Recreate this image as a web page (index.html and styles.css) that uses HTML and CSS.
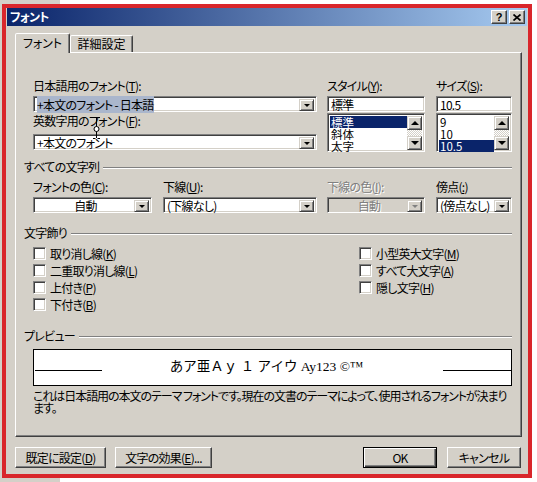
FILE: index.html
```html
<!DOCTYPE html>
<html lang="ja">
<head>
<meta charset="utf-8">
<title>フォント</title>
<link rel="stylesheet" href="styles.css">
</head>
<body>
<div class="frame">
  <div class="dialog">
    <div class="titlebar">
      <span class="title">フォント</span>
      <div class="tbtns">
        <span class="tbtn help">?</span>
        <span class="tbtn close"><svg width="8" height="7" viewBox="0 0 8 7"><path d="M0.5 0.5 L7.5 6.5 M7.5 0.5 L0.5 6.5" stroke="#000" stroke-width="1.7"/></svg></span>
      </div>
    </div>
    <div class="tabs">
      <div class="tab active">フォント</div>
      <div class="tab">詳細設定</div>
    </div>
    <div class="panel">
      <div class="row1">
        <div class="col w284">
          <div class="lbl">日本語用のフォント(<u>T</u>):</div>
          <div class="combo"><span class="val"><span class="hl">+本文のフォント - 日本語</span></span><span class="arrow"><i class="tri"></i></span></div>
          <div class="lbl l2">英数字用のフォント(<u>F</u>):</div>
          <div class="combo c2"><span class="val">+本文のフォント</span><span class="arrow"><i class="tri"></i></span></div>
        </div>
        <div class="col w98">
          <div class="lbl">スタイル(<u>Y</u>):</div>
          <div class="edit">標準</div>
          <div class="list">
            <div class="items">
              <div class="item sel">標準</div>
              <div class="item">斜体</div>
              <div class="item">太字</div>
            </div>
            <div class="sbar">
              <span class="sbtn"><i class="up"></i></span>
              <span class="track"></span>
              <span class="sbtn"><i class="down"></i></span>
            </div>
          </div>
        </div>
        <div class="col w76">
          <div class="lbl">サイズ(<u>S</u>):</div>
          <div class="edit">10.5</div>
          <div class="list">
            <div class="items">
              <div class="item">9</div>
              <div class="item">10</div>
              <div class="item sel">10.5</div>
            </div>
            <div class="sbar">
              <span class="sbtn"><i class="up"></i></span>
              <span class="track"></span>
              <span class="sbtn"><i class="down"></i></span>
            </div>
          </div>
        </div>
      </div>

      <div class="group g1"><span>すべての文字列</span><i class="rule"></i></div>
      <div class="row2">
        <div class="col w119">
          <div class="lbl">フォントの色(<u>C</u>):</div>
          <div class="combo"><span class="val center">自動</span><span class="arrow"><i class="tri"></i></span></div>
        </div>
        <div class="col w154">
          <div class="lbl">下線(<u>U</u>):</div>
          <div class="combo"><span class="val">(下線なし)</span><span class="arrow"><i class="tri"></i></span></div>
        </div>
        <div class="col w98">
          <div class="lbl dis">下線の色(<u>I</u>):</div>
          <div class="combo disabled"><span class="val center">自動</span><span class="arrow"><i class="tri"></i></span></div>
        </div>
        <div class="col w76">
          <div class="lbl">傍点(<u>:</u>)</div>
          <div class="combo"><span class="val">(傍点なし)</span><span class="arrow"><i class="tri"></i></span></div>
        </div>
      </div>

      <div class="group g2"><span>文字飾り</span><i class="rule"></i></div>
      <div class="checks">
        <div class="ccol">
          <div class="chk"><i class="box"></i>取り消し線(<u>K</u>)</div>
          <div class="chk"><i class="box"></i>二重取り消し線(<u>L</u>)</div>
          <div class="chk"><i class="box"></i>上付き(<u>P</u>)</div>
          <div class="chk"><i class="box"></i>下付き(<u>B</u>)</div>
        </div>
        <div class="ccol right">
          <div class="chk"><i class="box"></i>小型英大文字(<u>M</u>)</div>
          <div class="chk"><i class="box"></i>すべて大文字(<u>A</u>)</div>
          <div class="chk"><i class="box"></i>隠し文字(<u>H</u>)</div>
        </div>
      </div>

      <div class="group g3"><span>プレビュー</span><i class="rule"></i></div>
      <div class="preview">
        <i class="pline left"></i>
        <span class="ptext">あア亜Ａｙ １ アイウ Ay123 ©™</span>
        <i class="pline right"></i>
      </div>
      <div class="desc">これは日本語用の本文のテーマ フォントです。現在の文書のテーマによって、使用されるフォントが決まり<br>ます。</div>
    </div>
    <div class="footer">
      <span class="btn b91">既定に設定(<u>D</u>)</span>
      <span class="btn b97">文字の効果(<u>E</u>)...</span>
      <span class="spacer"></span>
      <span class="btn b74 default">OK</span>
      <span class="btn b74">キャンセル</span>
    </div>
  </div>
</div>
<svg class="cursor" width="9" height="22" viewBox="0 0 9 22"><path d="M1 0.5 H3.5 M5.5 0.5 H8 M4.5 1 V21 M1 21.5 H3.5 M5.5 21.5 H8" stroke="#000" stroke-width="1" fill="none"/><circle cx="4.5" cy="12" r="2.5" fill="#fff" stroke="#000" stroke-width="1"/></svg>
</body>
</html>
```

FILE: styles.css
```css
* { box-sizing: border-box; }
html, body { margin: 0; padding: 0; }
body {
  width: 537px;
  height: 482px;
  overflow: hidden;
  position: relative;
  background: linear-gradient(to right, #d4d0c8 60px, #ffffff 60px);
  font-family: "Noto Sans CJK JP", "Noto Sans", sans-serif;
  font-size: 12px;
  color: #000;
  font-feature-settings: "palt";
  letter-spacing: -0.75px;
}
u { text-decoration: underline; text-underline-offset: 1px; }

.frame {
  margin: 4px 0 0 2px;
  width: 530px;
  height: 474px;
  border: 4px solid #d9262b;
  background: #d4d0c8;
}
.dialog { padding: 0 1px; }

.titlebar {
  height: 18px;
  display: flex;
  align-items: center;
  justify-content: space-between;
  padding: 0 2px 0 3px;
  background: linear-gradient(to right, #0a246a, #a6caf0);
}
.title { color: #fff; font-weight: bold; line-height: 18px; }
.tbtns { display: flex; gap: 2px; }
.tbtn {
  width: 16px; height: 14px;
  display: flex; align-items: center; justify-content: center;
  background: #d4d0c8;
  border: 1px solid; border-color: #fff #404040 #404040 #fff;
  box-shadow: inset -1px -1px #808080;
  font-family: "Liberation Sans", sans-serif;
  font-weight: bold; font-size: 11px; line-height: 12px;
  letter-spacing: 0;
}

.tabs {
  height: 26px;
  display: flex;
  align-items: flex-end;
  padding-left: 8px;
}
.tab {
  height: 17px;
  line-height: 16px;
  text-align: center;
  background: #d4d0c8;
  border: 1px solid; border-bottom: none;
  border-color: #fff #404040 transparent #fff;
  box-shadow: inset -1px 0 #808080;
  border-radius: 2px 2px 0 0;
  width: 63px;
  letter-spacing: 0;
}
.tab.active {
  width: 55px;
  height: 20px;
  line-height: 18px;
  margin-bottom: -1px;
  position: relative;
  z-index: 1;
}

.panel {
  margin-left: 8px;
  width: 507px;
  height: 385px;
  border: 1px solid; border-color: #fff #404040 #404040 #fff;
  box-shadow: inset -1px -1px #808080;
  padding: 26px 9px 0 8px;
}

.lbl { line-height: 14px; height: 14px; margin-bottom: 3px; white-space: nowrap; }
.lbl.l2 { margin-top: 2px; margin-bottom: 6px; }
.lbl.dis { color: #808080; text-shadow: 1px 1px #fff; }

.row1 { display: flex; margin-left: 9px; }
.row1 .col + .col { margin-left: 10px; }
.row1 .col.w76 { margin-left: 11px; }
.w284 { width: 284px; }
.w98 { width: 98px; }
.w76 { width: 76px; }
.w119 { width: 119px; }
.w154 { width: 154px; }

.combo, .edit, .list {
  background: #fff;
  border: 1px solid; border-color: #808080 #fff #fff #808080;
  box-shadow: inset 1px 1px #404040, inset -1px -1px #d4d0c8;
}
.combo {
  height: 16px;
  display: flex;
  padding: 2px;
}
.combo .val {
  flex: 1;
  line-height: 12px;
  white-space: nowrap;
  padding-left: 1px;
}
.combo .val.center { text-align: center; }
.hl { background: #aab6cc; }
.arrow {
  width: 15px;
  height: 12px;
  display: flex; align-items: center; justify-content: center;
  background: #d4d0c8;
  border: 1px solid; border-color: #d4d0c8 #404040 #404040 #d4d0c8;
  box-shadow: inset 1px 1px #fff, inset -1px -1px #808080;
}
.tri {
  width: 0; height: 0;
  border-top: 3px solid #000;
  border-left: 3px solid transparent;
  border-right: 3px solid transparent;
}
.combo.disabled { background: #d4d0c8; }
.combo.disabled .val { color: #808080; text-shadow: 1px 1px #fff; }
.combo.disabled .tri { border-top-color: #808080; }

.edit {
  height: 16px;
  padding: 1px 2px 0 3px;
  line-height: 13px;
  margin-bottom: 1px;
}
.list {
  height: 39px;
  display: flex;
  padding: 1px 2px 0 2px;
}
.items { flex: 1; padding-top: 1px; }
.item { line-height: 12px; height: 12px; padding-left: 1px; white-space: nowrap; letter-spacing: 0; font-size: 11.5px; }
.item.sel { background: #0a246a; color: #fff; }
.sbar { width: 15px; height: 35px; display: flex; flex-direction: column; padding-top: 1px; }
.sbtn {
  height: 14px;
  flex: none;
  display: flex; align-items: center; justify-content: center;
  background: #d4d0c8;
  border: 1px solid; border-color: #d4d0c8 #404040 #404040 #d4d0c8;
  box-shadow: inset 1px 1px #fff, inset -1px -1px #808080;
}
.track {
  flex: 1;
  background-image: repeating-conic-gradient(#ffffff 0 25%, #d4d0c8 0 50%);
  background-size: 2px 2px;
}
.up, .down { width: 0; height: 0; border-left: 4px solid transparent; border-right: 4px solid transparent; }
.up { border-bottom: 4px solid #000; }
.down { border-top: 4px solid #000; }

.group {
  display: flex;
  align-items: center;
  line-height: 14px;
  height: 14px;
}
.group .rule {
  flex: 1;
  height: 2px;
  margin-left: 4px;
  margin-top: 1px;
  border-top: 1px solid #808080;
  border-bottom: 1px solid #fff;
}
.g1 { margin-top: 8px; }
.g2 { margin-top: 13px; }
.g3 { margin-top: 16px; }

.row2 { display: flex; margin-left: 9px; margin-top: 6px; }
.row2 .col + .col { margin-left: 11px; }
.row2 .col.w98 { margin-left: 10px; }

.checks { display: flex; margin-left: 9px; margin-top: 5px; }
.ccol { width: 326px; }
.ccol.right { width: auto; }
.chk { height: 17px; display: flex; align-items: center; white-space: nowrap; }
.box {
  width: 13px; height: 13px;
  margin-right: 4px;
  background: #fff;
  border: 1px solid; border-color: #808080 #fff #fff #808080;
  box-shadow: inset 1px 1px #404040, inset -1px -1px #d4d0c8;
}

.preview {
  margin: 6px 0 0 9px;
  height: 37px;
  border: 1px solid #000;
  background: #fff;
  display: flex;
  align-items: baseline;
  padding: 7px 0 0 1px;
}
.pline { display: inline-block; height: 0; border-bottom: 1px solid #000; }
.pline.left { width: 67px; }
.pline.right { width: 68px; }
.ptext {
  flex: 1;
  text-align: center;
  font-family: "Liberation Serif", "Noto Sans CJK JP", serif;
  font-feature-settings: normal;
  letter-spacing: 0;
  font-size: 13.5px;
  line-height: 20px;
  padding-right: 12px;
  white-space: nowrap;
}
.desc { margin: 4px 0 0 9px; line-height: 12px; white-space: nowrap; letter-spacing: -1.05px; }

.footer {
  display: flex;
  margin-top: 10px;
  padding: 0 6px 0 8px;
}
.btn {
  height: 21px;
  display: flex; align-items: center; justify-content: center;
  background: #d4d0c8;
  border: 1px solid; border-color: #fff #404040 #404040 #fff;
  box-shadow: inset -1px -1px #808080;
  white-space: nowrap;
}
.b91 { width: 91px; margin-right: 9px; }
.b97 { width: 97px; }
.b74 { width: 74px; }
.spacer { flex: 1; }
.btn.default {
  margin-right: 10px;
  border-color: #000;
  box-shadow: inset 1px 1px #fff, inset -1px -1px #404040, inset -2px -2px #808080;
}

.cursor { position: absolute; left: 92px; top: 117px; }
```
